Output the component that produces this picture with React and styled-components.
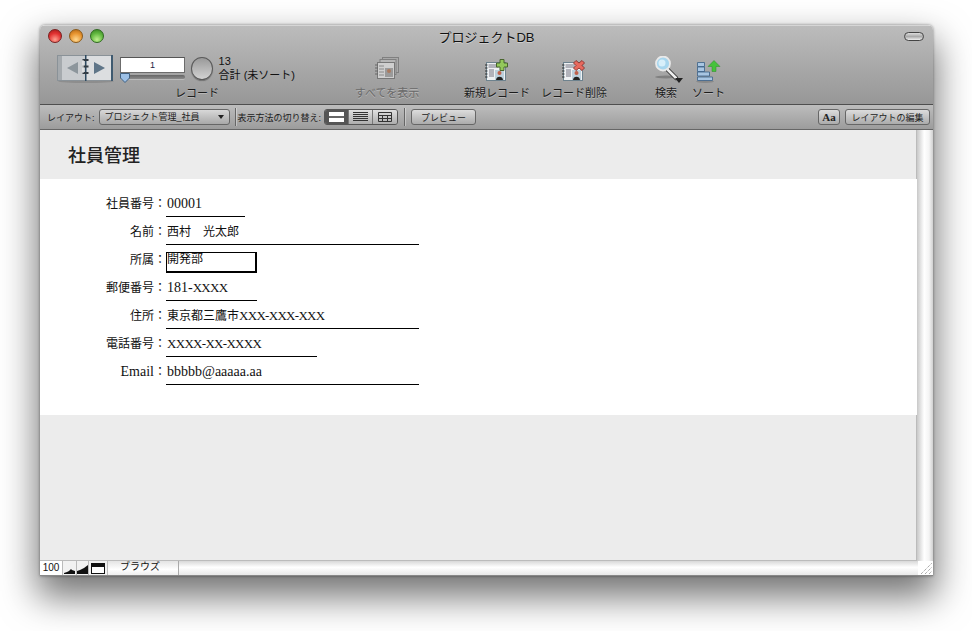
import React from "react";
import styled, { createGlobalStyle } from "styled-components";

const Global = createGlobalStyle`
  html, body { margin: 0; padding: 0; background: #fff; }
  body { width: 972px; height: 631px; overflow: hidden; font-family: "Liberation Sans", "Noto Sans CJK JP", sans-serif; }
`;

const Stage = styled.div`
  width: 972px;
  height: 631px;
  padding: 25px 0 0 40px;
  box-sizing: border-box;
`;

const Window = styled.div`
  width: 893px;
  height: 551px;
  display: flex;
  flex-direction: column;
  border-radius: 5px 5px 0 0;
  box-shadow: 0 18px 36px 3px rgba(0, 0, 0, 0.55), 0 0 3px rgba(0, 0, 0, 0.45);
  background: #fff;
  overflow: hidden;
`;

const Chrome = styled.div`
  height: 80px;
  flex: none;
  box-sizing: border-box;
  border-top: 1px solid #d6d6d6;
  border-bottom: 1px solid #4e4e4e;
  background: linear-gradient(#bcbcbc, #ababab 45%, #979797);
`;

const TitleRow = styled.div`
  height: 20px;
  margin-bottom: 2px;
  display: grid;
  grid-template-columns: 1fr auto 1fr;
  align-items: center;
`;

const Title = styled.div`
  font-size: 13px;
  color: #111;
  text-shadow: 0 1px 0 rgba(255, 255, 255, 0.35);
`;

const Lights = styled.div`
  padding-left: 8px;
  display: flex;
  gap: 7px;
`;

const Light = styled.span`
  width: 14px;
  height: 14px;
  border-radius: 50%;
  box-sizing: border-box;
  border: 1px solid ${p => p.$edge};
  background: radial-gradient(circle at 50% 80%, ${p => p.$glow}, ${p => p.$base} 55%, ${p => p.$dark});
`;

const Pill = styled.span`
  justify-self: end;
  margin-right: 9px;
  width: 20px;
  height: 9px;
  box-sizing: border-box;
  border: 1px solid #444;
  border-radius: 5px;
  background: linear-gradient(#ddd, #aaa 50%, #eee);
`;

const ToolRow = styled.div`
  height: 57px;
  display: flex;
  align-items: flex-start;
`;

const RecordGroup = styled.div`
  width: 238px;
  margin-left: 17px;
  flex: none;
`;

const RecordTop = styled.div`
  height: 38px;
  display: flex;
  align-items: flex-start;
`;

const BookSlot = styled.div`
  margin-top: 7px;
  width: 57px;
  height: 28px;
`;

const Pager = styled.div`
  position: relative;
  margin: 9px 0 0 6px;
  width: 65px;
`;

const PageInput = styled.div`
  width: 65px;
  height: 16px;
  box-sizing: border-box;
  background: #fff;
  border: 1px solid #6c6c6c;
  border-top-color: #555;
  font-size: 9px;
  line-height: 14px;
  text-align: center;
  color: #224;
`;

const SliderTrack = styled.div`
  margin-top: 2px;
  height: 4px;
  border-radius: 2px;
  background: linear-gradient(#666, #8a8a8a);
  border-bottom: 1px solid #bbb;
`;

const SliderThumb = styled.div`
  position: absolute;
  left: 0;
  top: 16px;
  width: 10px;
  height: 10px;
  display: flex;
`;

const Knob = styled.div`
  margin: 9px 0 0 6px;
  width: 22px;
  height: 23px;
  border-radius: 50%;
  box-sizing: border-box;
  border: 1px solid #5a5a5a;
  background: linear-gradient(#999, #d2d2d2);
  box-shadow: 0 1px 1px rgba(0, 0, 0, 0.3);
`;

const Count = styled.div`
  margin: 6px 0 0 6px;
  font-size: 11px;
  line-height: 14px;
  color: #111;
  white-space: nowrap;
`;

const ToolLabel = styled.div`
  height: 14px;
  margin-left: ${p => p.$ml || 0}px;
  align-self: ${p => (p.$start ? "flex-start" : "auto")};
  font-size: 11px;
  line-height: 14px;
  white-space: nowrap;
  color: ${p => (p.$off ? "#6a6a6a" : "#1c1c1c")};
  text-shadow: 0 1px 0 rgba(255, 255, 255, 0.3);
`;

const ToolButton = styled.div`
  flex: none;
  width: ${p => p.$w}px;
  margin-left: ${p => p.$ml}px;
  display: flex;
  flex-direction: column;
  align-items: center;
`;

const IconSlot = styled.div`
  height: 38px;
  box-sizing: border-box;
  padding-top: ${p => p.$top}px;
  align-self: stretch;
  display: flex;
  justify-content: center;
`;

const FormatBar = styled.div`
  height: 25px;
  flex: none;
  box-sizing: border-box;
  display: flex;
  align-items: center;
  padding: 0 3px 0 7px;
  border-bottom: 1px solid #666;
  background: linear-gradient(#bdbdbd, #9c9c9c);
  font-size: 9px;
  color: #1c1c1c;
`;

const LayoutSelect = styled.div`
  width: 131px;
  height: 16px;
  margin-left: 4px;
  box-sizing: border-box;
  border: 1px solid #666;
  border-radius: 3px;
  background: linear-gradient(#d8d8d8, #a8a8a8);
  display: flex;
  align-items: center;
  justify-content: space-between;
  padding: 0 5px;
  font-size: 9px;
  line-height: 14px;
`;

const Arrow = styled.span`
  width: 0;
  height: 0;
  border-left: 3.5px solid transparent;
  border-right: 3.5px solid transparent;
  border-top: 4px solid #222;
`;

const Divider = styled.span`
  width: 1px;
  height: 18px;
  margin: ${p => p.$m};
  background: #666;
  box-shadow: 1px 0 0 rgba(255, 255, 255, 0.35);
`;

const Seg = styled.div`
  display: flex;
  height: 16px;
  margin-left: 3px;
  box-sizing: border-box;
  border: 1px solid #555;
  border-radius: 3px;
  overflow: hidden;
`;

const SegBtn = styled.span`
  width: 24px;
  display: flex;
  align-items: center;
  justify-content: center;
  box-sizing: border-box;
  border-right: ${p => (p.$last ? "none" : "1px solid #777")};
  background: ${p => (p.$on ? "#555" : "linear-gradient(#e0e0e0, #adadad)")};
`;

const Btn = styled.span`
  height: 16px;
  box-sizing: border-box;
  flex: none;
  width: ${p => p.$w}px;
  margin-left: ${p => p.$ml || 0}px;
  display: flex;
  align-items: center;
  justify-content: center;
  border: 1px solid #666;
  border-radius: 3px;
  background: linear-gradient(#dcdcdc, #ababab);
  font-size: 9px;
  color: #222;
`;

const FontBtnText = styled.span`
  font-family: "Liberation Serif", serif;
  font-size: 11px;
  font-weight: bold;
  color: #222;
`;

const Spacer = styled.span`
  flex: 1;
`;

const Body = styled.div`
  flex: 1;
  display: flex;
  min-height: 0;
`;

const Content = styled.div`
  flex: 1;
  display: flex;
  flex-direction: column;
  background: #ececec;
  box-shadow: inset -1px -1px 0 #bbb;
`;

const Header = styled.div`
  height: 49px;
  flex: none;
  display: flex;
  align-items: center;
  padding-left: 28px;
  padding-bottom: 2px;
  box-sizing: border-box;
  font-size: 18px;
  font-weight: 500;
  color: #222;
`;

const Form = styled.div`
  height: 236px;
  flex: none;
  background: #fff;
  box-sizing: border-box;
  padding-top: 12px;
  font-family: "Liberation Serif", "Noto Sans CJK JP", serif;
`;

const Row = styled.div`
  height: 28px;
  display: flex;
  color: #111;
`;

const Label = styled.div`
  width: 126px;
  flex: none;
  text-align: right;
  line-height: 26px;
  font-size: 12px;
  white-space: nowrap;
`;

const Field = styled.div`
  width: ${p => p.$w}px;
  box-sizing: border-box;
  padding-left: 1px;
  font-size: 12px;
  white-space: nowrap;
  height: 26px;
  line-height: 26px;
  border-bottom: 1px solid #000;
`;

const BoxedField = styled(Field)`
  height: 21px;
  margin-top: 5px;
  padding-left: 0;
  line-height: 13px;
  border: 1px solid #000;
  border-right-width: 2px;
  border-bottom-width: 2px;
`;

const Wide = styled.span`
  font-size: 14px;
`;

const Narrow = styled.span`
  font-size: 13px;
  letter-spacing: -0.7px;
`;

const ScrollStrip = styled.div`
  width: 16px;
  flex: none;
  background: linear-gradient(to right, #c8c8c8, #fff 45%, #f4f4f4 75%, #d0d0d0);
`;

const StatusBar = styled.div`
  height: 15px;
  flex: none;
  display: flex;
  font-size: 10px;
  color: #111;
  background: linear-gradient(#d8d8d8, #fff 45%, #e8e8e8);
  border-bottom: 1px solid #888;
  box-sizing: border-box;
`;

const ZoomCell = styled.span`
  width: 23px;
  box-sizing: border-box;
  background: #fff;
  text-align: center;
  line-height: 14px;
  border-right: 1px solid #bbb;
`;

const StatCell = styled.span`
  width: ${p => p.$w}px;
  display: flex;
  align-items: flex-end;
  justify-content: center;
  padding-bottom: 1px;
  box-sizing: border-box;
  background: #f2f2f2;
  border-right: 1px solid #bbb;
`;

const ModeTab = styled.span`
  width: 71px;
  box-sizing: border-box;
  padding-right: 6px;
  background: linear-gradient(#e4e4e4, #fff 60%, #eee);
  border-right: 1px solid #aaa;
  text-align: center;
  font-size: 10px;
  line-height: 12px;
`;

const Grip = styled.span`
  width: 15px;
  background: #fff;
  display: flex;
  margin-left: auto;
`;

const PersonCard = ({ y = 0 }) => (
  <g transform={`translate(0 ${y})`}>
    <rect x="1.500" y=".5" width="19" height="18" fill="#eef1f3" stroke="#6d828e" />
    <path d="M3.500 3h10M3.500 5h10M4 8h5M4 10h5M4 12h5M4 14h5" stroke="#556" strokeWidth=".8" />
    <rect x="10" y="8" width="9" height="10" fill="#bcd0dc" />
    <circle cx="14.500" cy="11" r="2" fill="#c0604a" />
    <path d="M11 18c0-4.500 7-4.500 7 0z" fill="#222" />
    <path d="M0 3h2.500M0 6h2.500M0 9h2.500M0 12h2.500M0 15h2.500" stroke="#333" />
  </g>
);

const BookIcon = () => (
  <svg width="57" height="28" viewBox="0 0 57 28">
    <ellipse cx="29" cy="26.500" rx="28" ry="1.500" fill="#000" opacity=".12" />
    <rect x=".5" y=".5" width="55" height="25" fill="#c9cccf" stroke="#8a9298" />
    <rect x="1" y="1" width="4" height="24" fill="#a5aaae" />
    <rect x="29" y="1" width="25" height="24" fill="#dcdee0" />
    <rect x="54" y="0" width="2" height="26" fill="#3f5a70" />
    <path d="M21 7v12L10 13z" fill="#8d969c" />
    <path d="M37 7v12l11-6z" fill="#5f7588" />
    <rect x="28" y="0" width="1.500" height="26" fill="#2f4a60" />
    <path d="M25.500 5h6M25.500 11.500h6M25.500 18h6" stroke="#333c44" strokeWidth="2" />
    <path d="M26 5v13" stroke="#f2f2f2" strokeWidth="1" />
  </svg>
);

const ShowAllIcon = () => (
  <svg width="24" height="23" viewBox="0 0 24 23">
    <rect x="7.500" y=".5" width="16" height="15" fill="#a9a9a9" stroke="#808080" />
    <rect x="5" y="2.500" width="16" height="15" fill="#b6b6b6" stroke="#808080" />
    <rect x="2.500" y="5.500" width="17" height="16" fill="#cfcfcf" stroke="#777" />
    <path d="M4 9h5M4 12h5M4 15h5M4 18h5" stroke="#8a8a8a" />
    <rect x="10" y="11" width="8" height="9" fill="#9a9a9a" />
    <circle cx="14" cy="14" r="2" fill="#a97a60" />
    <path d="M0 8h3M0 11h3M0 14h3M0 17h3" stroke="#666" />
  </svg>
);

const NewIcon = () => (
  <svg width="24" height="23" viewBox="0 0 24 23">
    <PersonCard y={3} />
    <path d="M15 .5h4v3.500h3.500v4H19v3.500h-4V8h-3.500V4H15z" fill="#93c85a" stroke="#48662c" />
  </svg>
);

const DeleteIcon = () => (
  <svg width="24" height="23" viewBox="0 0 24 23">
    <PersonCard y={3} />
    <path d="M14 1.500l3 2.500 3-2.500 2.500 2.500L20 6.500 22.500 9 20 11.500 17 9l-3 2.500L11.500 9 14 6.500 11.500 4z" fill="#e8695e" stroke="#8c3a35" />
  </svg>
);

const SearchIcon = () => (
  <svg width="28" height="28" viewBox="0 0 28 28">
    <ellipse cx="11" cy="21" rx="11" ry="1.500" fill="#000" opacity=".22" />
    <path d="M13 14l8 8" stroke="#333" strokeWidth="4.500" strokeLinecap="round" />
    <path d="M13 14l8 8" stroke="#eee" strokeWidth="2.500" strokeLinecap="round" />
    <circle cx="8" cy="7.500" r="7" fill="#a8d6ee" stroke="#e9e9e9" strokeWidth="1.800" />
    <circle cx="7" cy="7" r="3.500" fill="#d8effa" />
    <path d="M20 22h8l-4 5z" fill="#222" />
  </svg>
);

const SortIcon = () => (
  <svg width="25" height="23" viewBox="0 0 25 23">
    <ellipse cx="9" cy="21.500" rx="9" ry="1.500" fill="#000" opacity=".15" />
    <path d="M1.500 2.500h7v4h-7zM1.500 7h7v4.500h-7zM1.500 12h12v4h-12zM1.500 17h15v3.500h-15z" fill="#a9c6e2" stroke="#3a5f86" strokeWidth=".8" />
    <path d="M18 .5l6 6h-4v5h-4v-5h-4z" fill="#46c23c" stroke="#2d8a28" strokeWidth=".5" />
  </svg>
);

const Thumb = () => (
  <svg width="10" height="10" viewBox="0 0 10 10">
    <path d="M.5.5h9v4.500L5 9.500.5 5z" fill="#9cc0e6" stroke="#3f5f80" />
  </svg>
);

const Lines = ({ mode }) => {
  if (mode === "form") return (
    <svg width="15" height="10" viewBox="0 0 15 10"><rect width="15" height="10" fill="#fff" /><path d="M0 5h15" stroke="#333" strokeWidth="1.500" /></svg>
  );
  if (mode === "list") return (
    <svg width="15" height="10" viewBox="0 0 15 10"><path d="M0 .5h15M0 2.500h15M0 4.500h15M0 6.500h15M0 8.500h15" stroke="#333" /></svg>
  );
  return (
    <svg width="14" height="10" viewBox="0 0 14 10"><path d="M.5.5h13v9H.5zM.5 3.500h13M.5 6.500h13M4.500 3.500v6M9.500 3.500v6" fill="none" stroke="#333" /></svg>
  );
};

const fields = [
  { key: "no", label: "社員番号：", value: <Wide>00001</Wide>, w: 79 },
  { key: "name", label: "名前：", value: "西村　光太郎", w: 253 },
  { key: "dept", label: "所属：", value: "開発部", w: 91, boxed: true },
  { key: "zip", label: "郵便番号：", value: <><Wide>181-</Wide><Narrow>XXXX</Narrow></>, w: 91 },
  { key: "addr", label: "住所：", value: <>東京都三鷹市<Narrow>XXX-XXX-XXX</Narrow></>, w: 253 },
  { key: "tel", label: "電話番号：", value: <Narrow>XXXX-XX-XXXX</Narrow>, w: 151 },
  { key: "mail", label: <><Wide>Email</Wide>：</>, value: <Wide>bbbbb@aaaaa.aa</Wide>, w: 253 },
];

export default function App() {
  return (
    <Stage>
      <Global />
      <Window>
        <Chrome>
          <TitleRow>
            <Lights>
              <Light $edge="#7a1f1f" $glow="#ffa090" $base="#e23232" $dark="#a01a1a" />
              <Light $edge="#8a5a1a" $glow="#ffd890" $base="#e89530" $dark="#b06414" />
              <Light $edge="#2f6a20" $glow="#bff090" $base="#62b840" $dark="#348020" />
            </Lights>
            <Title>プロジェクトDB</Title>
            <Pill />
          </TitleRow>
          <ToolRow>
            <RecordGroup>
              <RecordTop>
                <BookSlot><BookIcon /></BookSlot>
                <Pager>
                  <PageInput>1</PageInput>
                  <SliderTrack />
                  <SliderThumb><Thumb /></SliderThumb>
                </Pager>
                <Knob />
                <Count>13<br />合計 (未ソート)</Count>
              </RecordTop>
              <ToolLabel $ml={118}>レコード</ToolLabel>
            </RecordGroup>
            <ToolButton $w={66} $ml={59}>
              <IconSlot $top={9}><ShowAllIcon /></IconSlot>
              <ToolLabel $off>すべてを表示</ToolLabel>
            </ToolButton>
            <ToolButton $w={66} $ml={44}>
              <IconSlot $top={11}><NewIcon /></IconSlot>
              <ToolLabel>新規レコード</ToolLabel>
            </ToolButton>
            <ToolButton $w={66} $ml={11}>
              <IconSlot $top={11}><DeleteIcon /></IconSlot>
              <ToolLabel>レコード削除</ToolLabel>
            </ToolButton>
            <ToolButton $w={28} $ml={48}>
              <IconSlot $top={8}><SearchIcon /></IconSlot>
              <ToolLabel $start>検索</ToolLabel>
            </ToolButton>
            <ToolButton $w={33} $ml={9}>
              <IconSlot $top={12}><SortIcon /></IconSlot>
              <ToolLabel>ソート</ToolLabel>
            </ToolButton>
          </ToolRow>
        </Chrome>
        <FormatBar>
          レイアウト:
          <LayoutSelect>プロジェクト管理_社員<Arrow /></LayoutSelect>
          <Divider $m="0 2px 0 5px" />
          表示方法の切り替え:
          <Seg>
            <SegBtn $on><Lines mode="form" /></SegBtn>
            <SegBtn><Lines mode="list" /></SegBtn>
            <SegBtn $last><Lines mode="table" /></SegBtn>
          </Seg>
          <Divider $m="0 6px 0 6px" />
          <Btn $w={65}>プレビュー</Btn>
          <Spacer />
          <Btn $w={22}><FontBtnText>Aa</FontBtnText></Btn>
          <Btn $w={85} $ml={5}>レイアウトの編集</Btn>
        </FormatBar>
        <Body>
          <Content>
            <Header>社員管理</Header>
            <Form>
              {fields.map(f => {
                const Value = f.boxed ? BoxedField : Field;
                return (
                  <Row key={f.key}>
                    <Label>{f.label}</Label>
                    <Value $w={f.w}>{f.value}</Value>
                  </Row>
                );
              })}
            </Form>
          </Content>
          <ScrollStrip />
        </Body>
        <StatusBar>
          <ZoomCell>100</ZoomCell>
          <StatCell $w={14}><svg width="11" height="6" viewBox="0 0 11 6"><path d="M0 6V5l3-1 2-1 2-2 1 1 3 1v3z" fill="#111" /></svg></StatCell>
          <StatCell $w={12}><svg width="11" height="9" viewBox="0 0 11 9"><path d="M0 9V6l3-1 4-2 4-3v9z" fill="#111" /></svg></StatCell>
          <StatCell $w={19}><svg width="14" height="11" viewBox="0 0 14 11"><rect x=".5" y=".5" width="13" height="10" fill="#fff" stroke="#111" /><rect width="14" height="4" fill="#111" /></svg></StatCell>
          <ModeTab>ブラウズ</ModeTab>
          <Grip><svg width="15" height="14" viewBox="0 0 15 14"><path d="M3 13L14 2M7 13l7-7M11 13l3-3" stroke="#888" strokeDasharray="1 1" /></svg></Grip>
        </StatusBar>
      </Window>
    </Stage>
  );
}
